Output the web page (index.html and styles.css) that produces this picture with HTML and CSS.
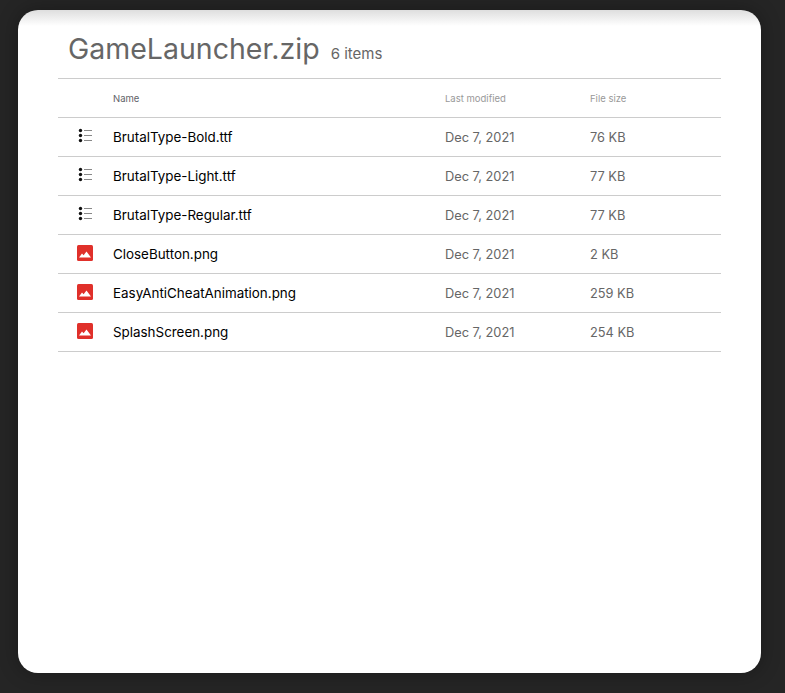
FILE: index.html
```html
<!DOCTYPE html>
<html lang="en">
<head>
<meta charset="utf-8">
<title>GameLauncher.zip</title>
<link rel="stylesheet" href="styles.css">
</head>
<body>
<svg class="defs" width="0" height="0" aria-hidden="true">
  <symbol id="font" viewBox="0 0 16 16">
    <circle cx="3.5" cy="2.5" r="1.7" fill="#111"/>
    <circle cx="3.5" cy="7.5" r="1.7" fill="#111"/>
    <circle cx="3.5" cy="12.5" r="1.7" fill="#111"/>
    <rect x="7" y="2" width="8" height="1" fill="#888"/>
    <rect x="7" y="7" width="8" height="1" fill="#888"/>
    <rect x="7" y="12" width="8" height="1" fill="#888"/>
  </symbol>
  <symbol id="image" viewBox="0 0 16 16">
    <rect width="16" height="16" rx="1.5" fill="#e0302a"/>
    <path d="M2 12.5 L5 8.6 L6.6 10.2 L9.5 6.6 L14 12.5 Z" fill="#fff"/>
  </symbol>
</svg>
<main class="card">
  <header class="head">
    <h1 class="title">GameLauncher.zip</h1>
    <span class="count">6 items</span>
  </header>
  <div class="table">
    <div class="row header">
      <span class="icon-cell"></span>
      <span class="name">Name</span>
      <span class="modified">Last modified</span>
      <span class="size">File size</span>
    </div>
    <div class="row">
      <span class="icon-cell"><svg class="icon"><use href="#font"/></svg></span>
      <span class="name">BrutalType-Bold.ttf</span>
      <span class="modified">Dec 7, 2021</span>
      <span class="size">76 KB</span>
    </div>
    <div class="row">
      <span class="icon-cell"><svg class="icon"><use href="#font"/></svg></span>
      <span class="name">BrutalType-Light.ttf</span>
      <span class="modified">Dec 7, 2021</span>
      <span class="size">77 KB</span>
    </div>
    <div class="row">
      <span class="icon-cell"><svg class="icon"><use href="#font"/></svg></span>
      <span class="name">BrutalType-Regular.ttf</span>
      <span class="modified">Dec 7, 2021</span>
      <span class="size">77 KB</span>
    </div>
    <div class="row">
      <span class="icon-cell"><svg class="icon"><use href="#image"/></svg></span>
      <span class="name">CloseButton.png</span>
      <span class="modified">Dec 7, 2021</span>
      <span class="size">2 KB</span>
    </div>
    <div class="row">
      <span class="icon-cell"><svg class="icon"><use href="#image"/></svg></span>
      <span class="name">EasyAntiCheatAnimation.png</span>
      <span class="modified">Dec 7, 2021</span>
      <span class="size">259 KB</span>
    </div>
    <div class="row">
      <span class="icon-cell"><svg class="icon"><use href="#image"/></svg></span>
      <span class="name">SplashScreen.png</span>
      <span class="modified">Dec 7, 2021</span>
      <span class="size">254 KB</span>
    </div>
  </div>
</main>
</body>
</html>
```
FILE: styles.css
```css
html, body {
  margin: 0;
  height: 100%;
}
body {
  background: #252525;
  box-sizing: border-box;
  padding: 10px 24px 20px 18px;
  font-family: "Inter", "Liberation Sans", sans-serif;
  overflow: hidden;
}
.defs {
  position: absolute;
}
.card {
  height: 663px;
  box-sizing: border-box;
  background: linear-gradient(#dedede, #fff 16px);
  border-radius: 20px;
  padding: 0 40px;
  box-shadow: 0 0 20px rgba(0, 0, 0, 0.3);
}
.head {
  height: 68px;
  display: flex;
  align-items: baseline;
  gap: 11px;
  padding: 19px 0 0 10px;
  box-sizing: border-box;
  color: #666;
}
.title {
  margin: 0;
  font-size: 28.5px;
  font-weight: 400;
  line-height: 40px;
}
.count {
  font-size: 15px;
}
.table {
  border-top: 1px solid #ccc;
}
.row {
  display: flex;
  align-items: center;
  height: 38px;
  border-bottom: 1px solid #ccc;
  font-size: 12.8px;
  color: #666;
}
.icon-cell {
  width: 55px;
  flex: none;
  display: flex;
  padding-left: 19px;
  box-sizing: border-box;
}
.icon {
  width: 16px;
  height: 16px;
  margin-top: -2px;
}
.name {
  width: 332px;
  flex: none;
  color: #000;
  font-size: 13.4px;
}
.modified {
  width: 145px;
  flex: none;
}
.header {
  font-size: 9.5px;
  color: #999;
}
.header .name {
  color: #5f6368;
  font-size: 9.5px;
}
```
